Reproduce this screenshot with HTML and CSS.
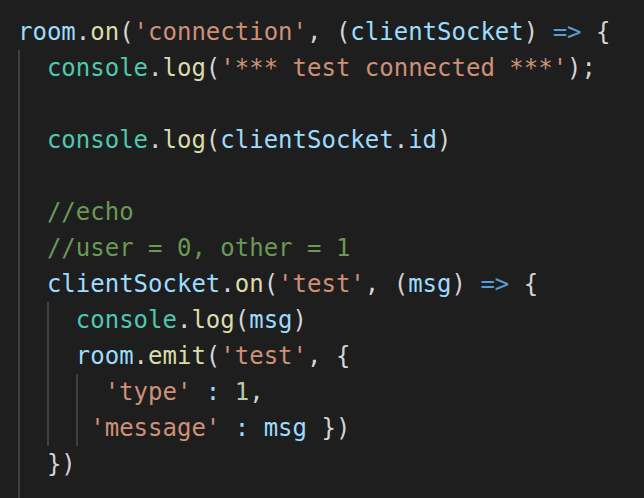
FILE: index.html
```html
<!DOCTYPE html>
<html>
<head>
<meta charset="utf-8">
<link rel="stylesheet" href="styles.css">
</head>
<body>
<div class="code">
  <div class="ln"><span class="v">room</span><span class="p">.</span><span class="f">on</span><span class="p">(</span><span class="s">'connection'</span><span class="p">, (</span><span class="v">clientSocket</span><span class="p">) </span><span class="k">=&gt;</span><span class="p"> {</span></div>
  <div class="block">
    <div class="ln"><span class="c">console</span><span class="p">.</span><span class="f">log</span><span class="p">(</span><span class="s">'*** test connected ***'</span><span class="p">);</span></div>
    <div class="ln"></div>
    <div class="ln"><span class="c">console</span><span class="p">.</span><span class="f">log</span><span class="p">(</span><span class="v">clientSocket</span><span class="p">.</span><span class="v">id</span><span class="p">)</span></div>
    <div class="ln"></div>
    <div class="ln"><span class="cm">//echo</span></div>
    <div class="ln"><span class="cm">//user = 0, other = 1</span></div>
    <div class="ln"><span class="v">clientSocket</span><span class="p">.</span><span class="f">on</span><span class="p">(</span><span class="s">'test'</span><span class="p">, (</span><span class="v">msg</span><span class="p">) </span><span class="k">=&gt;</span><span class="p"> {</span></div>
    <div class="block">
      <div class="ln"><span class="c">console</span><span class="p">.</span><span class="f">log</span><span class="p">(</span><span class="v">msg</span><span class="p">)</span></div>
      <div class="ln"><span class="v">room</span><span class="p">.</span><span class="f">emit</span><span class="p">(</span><span class="s">'test'</span><span class="p">, {</span></div>
      <div class="block">
        <div class="ln"><span class="s">'type'</span><span class="p"> </span><span class="v">:</span><span class="p"> </span><span class="n">1</span><span class="p">,</span></div>
        <div class="ln out1"><span class="s">'message'</span><span class="p"> </span><span class="v">:</span><span class="p"> </span><span class="v">msg</span><span class="p"> })</span></div>
      </div>
    </div>
    <div class="ln"><span class="p">})</span></div>
    <div class="tail"></div>
  </div>
</div>
</body>
</html>
```

FILE: styles.css
```css
html, body {
  margin: 0;
  padding: 0;
  background: #1e1e1e;
  width: 644px;
  height: 498px;
  overflow: hidden;
}

.code {
  padding: 14px 0 0 18px;
  font-family: "DejaVu Sans Mono", monospace;
  font-size: 24px;
  color: #d4d4d4;
}

.ln {
  height: 36px;
  line-height: 36px;
  white-space: pre;
}

.tail {
  height: 16px;
}

.block {
  border-left: 2px solid #404040;
  padding-left: calc(2ch - 2px);
}

.out1 {
  margin-left: -1ch;
}

.v { color: #9cdcfe; }
.f { color: #dcdcaa; }
.s { color: #ce9178; }
.p { color: #d4d4d4; }
.k { color: #569cd6; }
.c { color: #4ec9b0; }
.cm { color: #6a9955; }
.n { color: #b5cea8; }
```
